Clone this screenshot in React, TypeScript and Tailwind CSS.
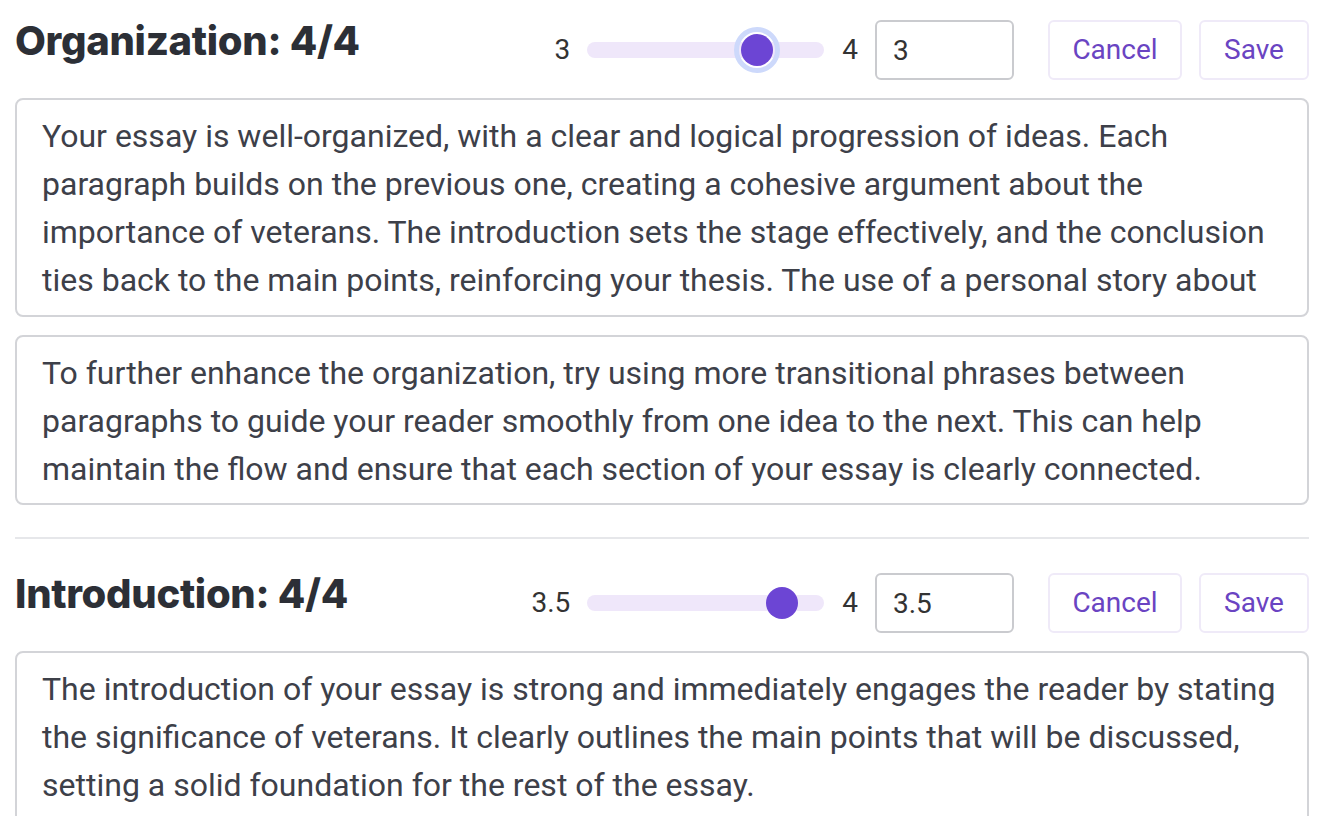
import { useState } from "react";

type Criterion = {
  title: string;
  min: string;
  max: string;
  value: string;
  thumb: number;
  focused?: boolean;
  feedback: string;
  suggestion?: string;
};

const CRITERIA: Criterion[] = [
  {
    title: "Organization: 4/4",
    min: "3",
    max: "4",
    value: "3",
    thumb: 170,
    focused: true,
    feedback:
      "Your essay is well-organized, with a clear and logical progression of ideas. Each paragraph builds on the previous one, creating a cohesive argument about the importance of veterans. The introduction sets the stage effectively, and the conclusion ties back to the main points, reinforcing your thesis. The use of a personal story about Grandpa John Doe towards the end adds a heartfelt touch that strengthens your argument.",
    suggestion:
      "To further enhance the organization, try using more transitional phrases between paragraphs to guide your reader smoothly from one idea to the next. This can help maintain the flow and ensure that each section of your essay is clearly connected.",
  },
  {
    title: "Introduction: 4/4",
    min: "3.5",
    max: "4",
    value: "3.5",
    thumb: 195,
    feedback:
      "The introduction of your essay is strong and immediately engages the reader by stating the significance of veterans. It clearly outlines the main points that will be discussed, setting a solid foundation for the rest of the essay.",
  },
];

export default function App() {
  return (
    <div className="min-h-screen overflow-hidden bg-white px-[15px] pt-5 font-['Roboto',sans-serif] text-[#3d4049]">
      {CRITERIA.map((c, i) => (
        <div key={c.title}>
          {i > 0 && <div className="mb-[34px] mt-[32px] h-[2px] bg-[#e6e7ea]" />}
          <CriterionBlock item={c} />
        </div>
      ))}
    </div>
  );
}

function CriterionBlock({ item }: { item: Criterion }) {
  const [value, setValue] = useState(item.value);

  return (
    <div className="flex flex-col gap-[18px]">
      <div className="flex items-start justify-between">
        <h2 className="font-['Inter',sans-serif] text-[40px] font-extrabold leading-[42px] tracking-[-0.3px] text-[#2c2f36]">
          {item.title}
        </h2>
        <div className="flex h-[60px] items-center">
          <span className="text-[28px] text-[#333]">{item.min}</span>
          <div className="relative ml-[17px] h-4 w-[237px] rounded-full bg-[#efe7fa]">
            <div
              className={`absolute top-1/2 h-8 w-8 -translate-y-1/2 rounded-full bg-[#6c45d4] ${
                item.focused ? "outline outline-[5px] outline-offset-[2px] outline-[#cdd9fb]" : ""
              }`}
              style={{ left: item.thumb - 16 }}
            />
          </div>
          <span className="ml-[18px] text-[28px] text-[#333]">{item.max}</span>
          <input
            value={value}
            onChange={(e) => setValue(e.target.value)}
            className="ml-[17px] h-[60px] w-[139px] rounded-[6px] border-2 border-[#cacbcf] px-4 text-[28px] text-[#333] outline-none"
          />
          <button className="ml-[34px] h-[60px] w-[134px] rounded-[6px] border-2 border-[#efeaf8] text-[28px] text-[#6a44c2]">
            Cancel
          </button>
          <button className="ml-[17px] h-[60px] w-[110px] rounded-[6px] border-2 border-[#efeaf8] text-[28px] text-[#6a44c2]">
            Save
          </button>
        </div>
      </div>
      <div className="h-[219px] overflow-hidden rounded-[8px] border-2 border-[#d3d4d8] px-[25px] pt-[12px] text-[32px] leading-[48px]">
        {item.feedback}
      </div>
      {item.suggestion && (
        <div className="rounded-[8px] border-2 border-[#d3d4d8] px-[25px] pb-[10px] pt-[12px] text-[32px] leading-[48px]">
          {item.suggestion}
        </div>
      )}
    </div>
  );
}
